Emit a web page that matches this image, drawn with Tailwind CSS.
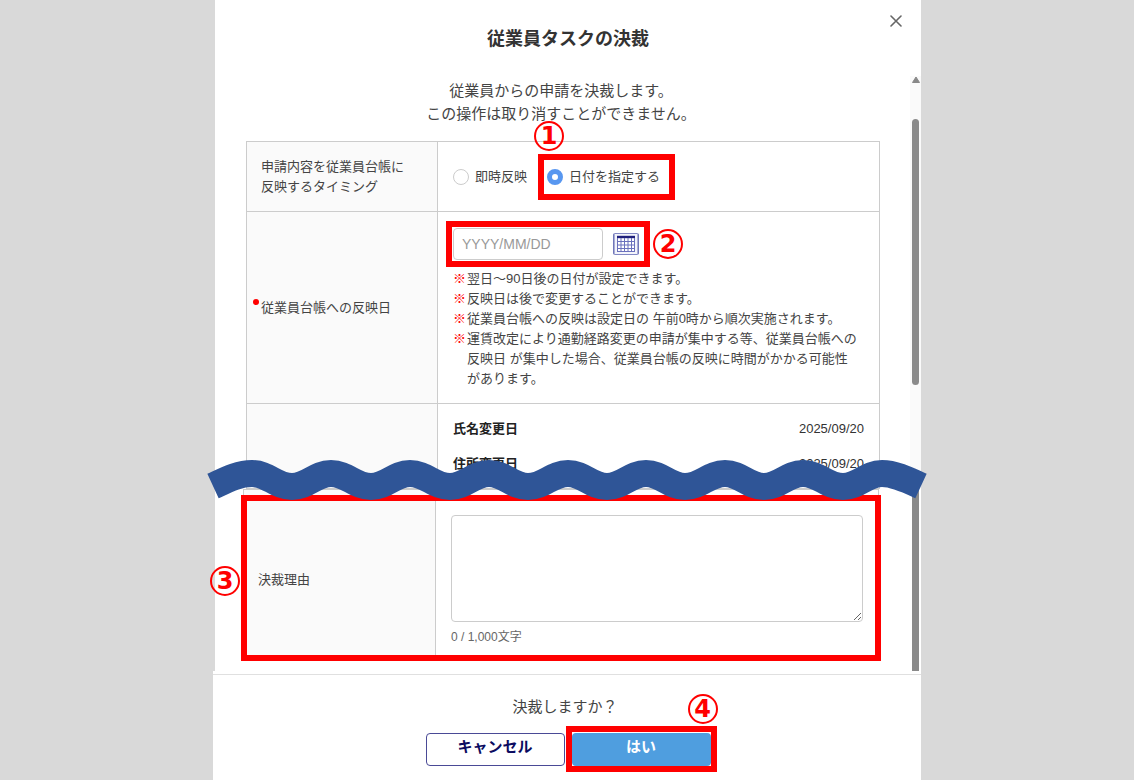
<!DOCTYPE html>
<html lang="ja">
<head>
    <meta charset="UTF-8">
    <meta name="viewport" content="width=device-width, initial-scale=1.0">
    <title>従業員タスクの決裁</title>
    <script src="https://cdn.jsdelivr.net/npm/@tailwindcss/browser@4"></script>
</head>
<body class="bg-[#d9d9d9] font-['Liberation_Sans','Noto_Sans_CJK_JP',sans-serif] text-[13px] leading-5 text-[#444]">

    <main class="mx-auto max-w-[708px]">

        <!-- Header -->
        <header class="relative ml-[2px] bg-white h-[76px] flex items-center justify-center">
            <h1 class="pt-[2px] text-lg font-bold text-[#333]">従業員タスクの決裁</h1>
            <button type="button" aria-label="閉じる" class="absolute right-[19px] top-[15px]">
                <svg class="size-3" viewBox="0 0 12 12" fill="none" stroke="#666" stroke-width="1.6" stroke-linecap="round">
                    <path d="M1 1l10 10M11 1L1 11"/>
                </svg>
            </button>
        </header>

        <!-- Scrolling body, upper part -->
        <section class="ml-[2px] bg-white flex">
            <div class="flex-1 pl-[31px] pr-[30px] pt-[3px]">
                <p class="text-center text-[15px] leading-[23px] pr-1 mb-4">従業員からの申請を決裁します。<br>この操作は取り消すことができません。</p>

                <table class="w-full table-fixed border-collapse">
                    <tbody>
                        <tr>
                            <th scope="row" class="w-[191px] h-[70px] border border-[#ccc] bg-[#fafafa] pl-[14px] text-left font-normal">申請内容を従業員台帳に<br>反映するタイミング</th>
                            <td class="border border-[#ccc] px-[15px]">
                                <div class="flex items-center gap-5">
                                    <label class="flex items-center gap-[6px]">
                                        <input type="radio" name="timing" class="appearance-none size-4 rounded-full border border-[#ccc] bg-white checked:border-[5px] checked:border-[#5897f0]">
                                        即時反映
                                    </label>
                                    <div class="relative">
                                        <label class="flex items-center gap-[6px]">
                                            <input type="radio" name="timing" checked class="appearance-none size-4 rounded-full border border-[#ccc] bg-white checked:border-[5px] checked:border-[#5897f0]">
                                            日付を指定する
                                        </label>
                                        <div class="absolute -left-[9px] -right-[15px] -inset-y-[13px] border-6 border-[#ff0000] pointer-events-none"></div>
                                        <span class="absolute -left-[13px] -top-[46px] size-[30px] rounded-full border-2 border-[#ff0000] flex items-center justify-center font-['DejaVu_Sans'] text-2xl font-bold text-[#ff0000]">1</span>
                                    </div>
                                </div>
                            </td>
                        </tr>
                        <tr>
                            <th scope="row" class="border border-[#ccc] bg-[#fafafa] pl-[14px] text-left font-normal">
                                <label for="date" class="relative">
                                    <span class="absolute -left-2 -top-[1px] size-[6px] rounded-full bg-[#ff0000]"></span>
                                    従業員台帳への反映日
                                </label>
                            </th>
                            <td class="border border-[#ccc] px-[15px] pt-4 pb-[14px]">
                                <div class="relative inline-flex items-center gap-[10px] align-top">
                                    <input id="date" type="text" placeholder="YYYY/MM/DD" class="w-[150px] h-8 rounded border border-[#ccc] px-2 text-sm placeholder:text-[#999]">
                                    <button type="button" aria-label="カレンダー">
                                        <svg class="w-[26px] h-[22px]" viewBox="0 0 26 22" fill="none">
                                            <rect x=".5" y=".5" width="25" height="21" rx="1" fill="#f3f4fb" stroke="#8288c4"/>
                                            <path d="M1 1v20M25 1v20" stroke="#6167b0"/>
                                            <path d="M4 3h18v16H4z" fill="#fff"/>
                                            <path d="M4 4h18" stroke="#20207c" stroke-width="2.4"/>
                                            <path d="M4.500 5v14M8 5v14M11.500 5v14M15 5v14M18.500 5v14M21.500 5v14M4 8.500h18M4 12h18M4 15.500h18M4 18.500h18" stroke="#6b71bd"/>
                                        </svg>
                                    </button>
                                    <div class="absolute -left-[7px] -right-[11px] -inset-y-[7px] border-6 border-[#ff0000] pointer-events-none"></div>
                                    <span class="absolute -right-[44px] top-[1px] size-[30px] rounded-full border-2 border-[#ff0000] flex items-center justify-center font-['DejaVu_Sans'] text-2xl font-bold text-[#ff0000]">2</span>
                                </div>
                                <ul class="mt-[9px]">
                                    <li class="flex gap-[1px]"><span class="font-black text-[#ff0000]">※</span><span>翌日～90日後の日付が設定できます。</span></li>
                                    <li class="flex gap-[1px]"><span class="font-black text-[#ff0000]">※</span><span>反映日は後で変更することができます。</span></li>
                                    <li class="flex gap-[1px]"><span class="font-black text-[#ff0000]">※</span><span>従業員台帳への反映は設定日の 午前0時から順次実施されます。</span></li>
                                    <li class="flex gap-[1px]"><span class="font-black text-[#ff0000]">※</span><span>運賃改定により通勤経路変更の申請が集中する等、従業員台帳への<br>反映日 が集中した場合、従業員台帳の反映に時間がかかる可能性<br>があります。</span></li>
                                </ul>
                            </td>
                        </tr>
                        <tr>
                            <th class="border border-[#ccc] bg-[#fafafa]"></th>
                            <td class="h-[85px] border border-[#ccc] px-[15px] align-top pt-[15px]">
                                <dl class="space-y-[15px] text-[#333]">
                                    <div class="flex justify-between">
                                        <dt class="font-bold text-[#222]">氏名変更日</dt>
                                        <dd>2025/09/20</dd>
                                    </div>
                                    <div class="flex justify-between">
                                        <dt class="font-bold text-[#222]">住所変更日</dt>
                                        <dd>2025/09/20</dd>
                                    </div>
                                </dl>
                            </td>
                        </tr>
                    </tbody>
                </table>
            </div>
            <!-- Scrollbar -->
            <div class="w-[11px] bg-[#fafafa] flex flex-col items-center">
                <svg class="w-2 h-[7px]" viewBox="0 0 8 7" fill="#888"><path d="M4 1L7.500 6.500h-7z" stroke="#888" stroke-linejoin="round"/></svg>
                <div class="mt-9 h-[266px] w-[7px] rounded-full bg-[#8a8a8a]"></div>
            </div>
        </section>

        <!-- Scrolling body, lower part -->
        <section class="relative ml-[2px] bg-white flex">
            <div class="flex-1 pl-7 pr-[31px] pb-[10px]">
                <div class="relative">
                    <table class="w-full table-fixed border-collapse">
                        <tbody>
                            <tr>
                                <th scope="row" class="w-[192px] border border-[#ccc] bg-[#fafafa] pl-[14px] pt-[10px] text-left font-normal">
                                    <label for="reason">決裁理由</label>
                                </th>
                                <td class="border border-[#ccc] px-[15px] pt-[25px] pb-[13px]">
                                    <textarea id="reason" class="block w-full h-[107px] rounded border border-[#ccc] resize"></textarea>
                                    <p class="mt-[5px] text-xs leading-5 text-[#666]">0 / 1,000文字</p>
                                </td>
                            </tr>
                        </tbody>
                    </table>
                    <div class="absolute -left-[2px] -right-[2px] top-[6px] bottom-0 border-6 border-[#ff0000] pointer-events-none"></div>
                    <span class="absolute -left-[33px] top-[77px] size-[30px] rounded-full border-2 border-[#ff0000] flex items-center justify-center font-['DejaVu_Sans'] text-2xl font-bold text-[#ff0000]">3</span>
                </div>
            </div>
            <div class="w-[11px] flex justify-center">
                <div class="w-[7px] bg-[#8a8a8a]"></div>
            </div>
            <!-- Wavy break between the two parts -->
            <svg class="absolute -left-2 -top-[30px] w-[calc(100%+14px)] h-[42px]" viewBox="207 459 720 42" preserveAspectRatio="none" fill="none">
                <path d="M213 486C226 480 238 473.500 252 473.500C268 473.500 276 486.500 292 486.500S315 473.500 331 473.500S355 486.500 371 486.500S394 473.500 410 473.500S434 486.500 450 486.500S473 473.500 489 473.500S512 486.500 528 486.500S552 473.500 568 473.500S591 486.500 607 486.500S630 473.500 646 473.500S669 486.500 685 486.500S709 473.500 725 473.500S748 486.500 764 486.500S787 473.500 803 473.500S827 486.500 843 486.500S866 473.500 882 473.500C895 473.500 908 480 921 486" stroke="#2f5597" stroke-width="27"/>
            </svg>
        </section>

        <!-- Footer -->
        <footer class="bg-white pt-[3px]">
            <div class="border-t border-[#e0e0e0] pt-[22px] pb-[14px]">
                <p class="text-center text-[15px] pr-1 mb-4">決裁しますか？</p>
                <div class="flex justify-center gap-[7px] pl-[2px]">
                    <button type="button" class="w-[139px] h-[33px] pb-[5px] rounded border border-[#4a4a96] bg-white text-[15px] font-bold text-[#0b0b60]">キャンセル</button>
                    <div class="relative">
                        <button type="button" class="w-[139px] h-[33px] pb-[5px] rounded bg-[#4f9edf] text-[15px] font-bold text-white">はい</button>
                        <div class="absolute -inset-x-[6px] -top-[7px] -bottom-[6px] border-6 border-[#ff0000] pointer-events-none"></div>
                        <span class="absolute -right-[7px] -top-[39px] size-[30px] rounded-full border-2 border-[#ff0000] flex items-center justify-center font-['DejaVu_Sans'] text-2xl font-bold text-[#ff0000]">4</span>
                    </div>
                </div>
            </div>
        </footer>

    </main>

</body>
</html>
